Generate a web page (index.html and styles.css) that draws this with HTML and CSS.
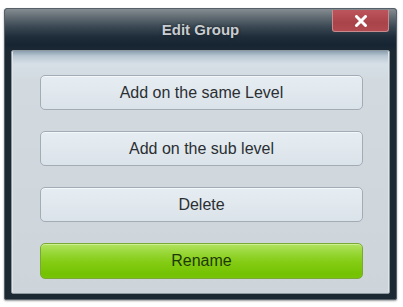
FILE: index.html
```html
<!DOCTYPE html>
<html>
<head>
<meta charset="utf-8">
<link rel="stylesheet" href="styles.css">
</head>
<body>
<div class="window">
  <div class="titlebar">
    <span class="title">Edit Group</span>
    <div class="close">
      <svg width="14" height="12" viewBox="0 0 14 12"><path d="M2.5 1.5 L11.5 10.5 M11.5 1.5 L2.5 10.5" stroke="#fff" stroke-width="3" stroke-linecap="round"/></svg>
    </div>
  </div>
  <div class="panel">
    <button class="btn">Add on the same Level</button>
    <button class="btn">Add on the sub level</button>
    <button class="btn">Delete</button>
    <button class="btn green">Rename</button>
  </div>
</div>
</body>
</html>
```
FILE: styles.css
```css
html, body {
  margin: 0;
  padding: 0;
  background: #ffffff;
  width: 403px;
  height: 307px;
  overflow: hidden;
}
.window {
  margin: 8px 0 0 4px;
  width: 393px;
  height: 292px;
  box-sizing: border-box;
  background: #1d2932;
  border: 1px solid #566068;
  border-radius: 3px 3px 2px 2px;
  padding: 0 6px 5px 6px;
  display: flex;
  flex-direction: column;
  box-shadow: 0 1px 2px rgba(0,0,0,0.4);
}
.titlebar {
  position: relative;
  height: 41px;
  margin: 0 -6px;
  background: linear-gradient(to bottom, #858d92 0px, #626c73 8px, #3a4853 18px, #1e2c3a 28px, #172533 36px, #1b2834 41px);
  border-radius: 2px 2px 0 0;
  display: flex;
  align-items: center;
  justify-content: center;
}
.title {
  font-family: "Liberation Sans", Arial, sans-serif;
  font-weight: bold;
  font-size: 15px;
  color: #c9cdd1;
  text-shadow: 0 0 3px rgba(0,0,0,0.6);
  margin-top: -1px;
}
.close {
  position: absolute;
  left: 327px;
  top: 1px;
  width: 57px;
  height: 22px;
  box-sizing: border-box;
  background: linear-gradient(to bottom, #bd565c, #a9434a 60%, #b04a50);
  border: 1px solid #c98a8e;
  border-top: none;
  border-radius: 0 0 3px 3px;
  display: flex;
  align-items: center;
  justify-content: center;
}
.panel {
  flex: 1;
  background: linear-gradient(to bottom, #8a9eae 0px, #b9c7d2 5px, #d6dfe6 13px, #d2dae0 30px, #cdd5db 100%);
  border: 1px solid #8e989f;
  border-radius: 2px;
  box-shadow: inset 1px 0 0 #dfe5ea, inset -1px 0 0 #dfe5ea;
  padding: 24px 26px 0 28px;
  display: flex;
  flex-direction: column;
  gap: 21px;
}
.btn {
  height: 35px;
  flex: none;
  box-sizing: border-box;
  background: linear-gradient(to bottom, #e6edf2, #dbe3ea);
  border: 1px solid #a3acb4;
  border-radius: 5px;
  font-family: "Liberation Sans", Arial, sans-serif;
  font-size: 16px;
  color: #2b2f33;
  padding: 0;
  box-shadow: inset 0 1px 0 #f4f8fb;
}
.btn.green {
  height: 36px;
  background: linear-gradient(to bottom, #b2e262 0px, #9ad83a 8px, #84cc14 18px, #74c202 30px, #78c40a 100%);
  border: 1px solid #7aa834;
  color: #1d3a06;
  box-shadow: inset 0 1px 0 #cdf090;
}
```
